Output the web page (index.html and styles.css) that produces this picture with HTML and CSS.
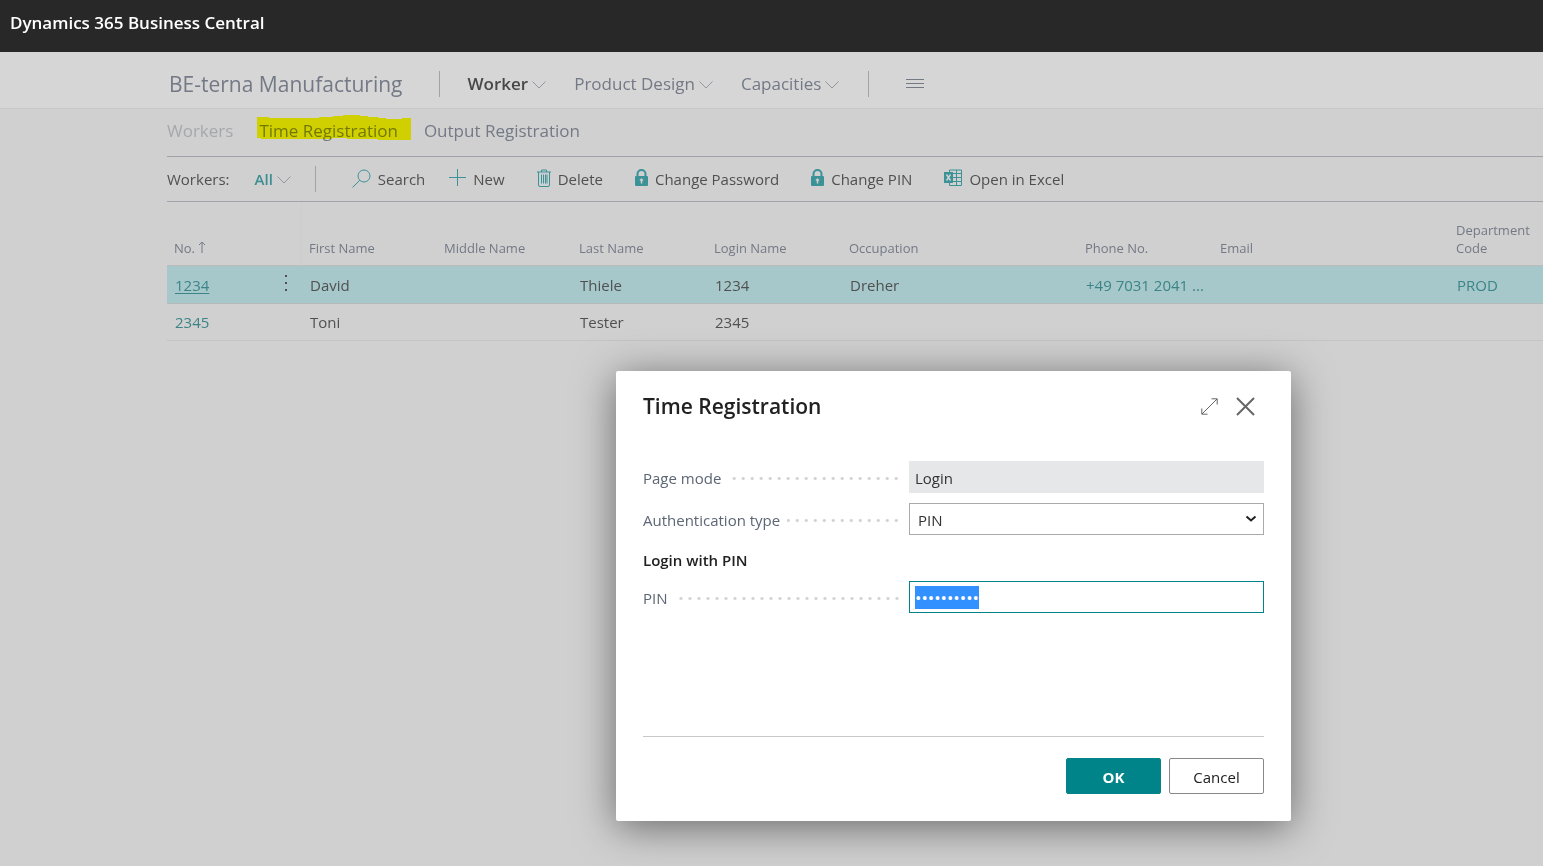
FILE: index.html
```html
<!DOCTYPE html>
<html lang="en">
<head>
  <meta charset="UTF-8">
  <meta name="viewport" content="width=device-width, initial-scale=1.0">
  <title>Workers - Dynamics 365 Business Central</title>
  <link rel="stylesheet" href="styles.css">
</head>
<body>
  <header class="topbar">Dynamics 365 Business Central</header>

  <nav class="navbar">
    <a class="company" href="#">BE-terna Manufacturing</a>
    <span class="divider"></span>
    <div class="menus">
      <button class="menu active">Worker
        <svg class="chevron" viewBox="0 0 14 8"><path d="M.5.5 7 7 13.500.5"/></svg>
      </button>
      <button class="menu">Product Design
        <svg class="chevron" viewBox="0 0 14 8"><path d="M.5.5 7 7 13.500.5"/></svg>
      </button>
      <button class="menu">Capacities
        <svg class="chevron" viewBox="0 0 14 8"><path d="M.5.5 7 7 13.500.5"/></svg>
      </button>
    </div>
    <span class="divider"></span>
    <button class="burger" aria-label="More">
      <svg width="18" height="10" viewBox="0 0 18 10"><path d="M0 .5h18M0 4.500h18M0 8.500h18"/></svg>
    </button>
  </nav>

  <main class="content">
    <nav class="tabs">
      <a class="tab current" href="#">Workers</a>
      <a class="tab marked" href="#">Time Registration
        <svg class="marker" viewBox="0 0 154 25" preserveAspectRatio="none"><path d="M0 2h12v1h50V2h14V1h10V0h17v1h8v1h10v1h8v1h16V3h9v22h-33v-1H90v-1H75v1H4v-1H0z"/></svg>
      </a>
      <a class="tab" href="#">Output Registration</a>
    </nav>

    <div class="toolbar">
      <span class="list-name">Workers:</span>
      <button class="filter">All
        <svg class="chevron" viewBox="0 0 14 8"><path d="M.5.5 7 7 13.500.5"/></svg>
      </button>
      <span class="divider"></span>
      <button class="action search">
        <svg width="19" height="19" viewBox="0 0 19 19"><circle cx="12" cy="7" r="6"/><path d="M7.800 11.300.5 18.500"/></svg>
        Search
      </button>
      <div class="actions">
        <button class="action">
          <svg width="17" height="18" viewBox="0 0 17 18"><path d="M8.500 0v17M0 8.500h17"/></svg>
          New
        </button>
        <button class="action">
          <svg width="14" height="18" viewBox="0 0 14 18"><path d="M0 3h14M4.500 3V1h5v2M1.500 3v13q0 1.500 1.500 1.500h8q1.500 0 1.500-1.500V3M4.500 5.500v9M6.500 5.500v9M8.500 5.500v9M10 5.500v9"/></svg>
          Delete
        </button>
        <button class="action">
          <svg width="13" height="18" viewBox="0 0 13 18"><path class="shackle" d="M2.500 8V5a4 4 0 0 1 8 0v3"/><rect class="solid" y="7" width="13" height="10" rx="1"/><path class="key" d="M6.500 9.500v5M4.800 11h3.400"/></svg>
          Change Password
        </button>
        <button class="action">
          <svg width="13" height="18" viewBox="0 0 13 18"><path class="shackle" d="M2.500 8V5a4 4 0 0 1 8 0v3"/><rect class="solid" y="7" width="13" height="10" rx="1"/><path class="key" d="M6.500 9.500v5M4.800 11h3.400"/></svg>
          Change PIN
        </button>
        <button class="action">
          <svg width="18" height="18" viewBox="0 0 18 18"><path d="M5.500 3.500v-2.500h12v15.500h-12v-2.500M9 4.500h8.500M9 8.500h8.500M9 12.500h8.500M12.500 1v15.500"/><rect class="solid" y="3" width="9" height="11"/><path class="cross" d="m2.500 5.500 4 6m0-6-4 6"/></svg>
          Open in Excel
        </button>
      </div>
    </div>

    <table class="workers">
      <colgroup>
        <col class="col-no"><col class="col-more"><col class="col"><col class="col"><col class="col"><col class="col">
        <col class="col-wide"><col class="col"><col class="col-wide"><col>
      </colgroup>
      <thead>
        <tr>
          <th colspan="2">No. <svg class="sort" width="8" height="12" viewBox="0 0 8 12"><path d="M4 12V1M1 4l3-3 3 3"/></svg></th>
          <th>First Name</th>
          <th>Middle Name</th>
          <th>Last Name</th>
          <th>Login Name</th>
          <th>Occupation</th>
          <th>Phone No.</th>
          <th>Email</th>
          <th>Department Code</th>
        </tr>
      </thead>
      <tbody>
        <tr class="selected">
          <td><a href="#">1234</a></td>
          <td class="more"><button aria-label="Row menu"><svg width="3" height="16" viewBox="0 0 3 16"><path d="M0 0h2v2H0zM0 7h2v2H0zM0 14h2v2H0z"/></svg></button></td>
          <td>David</td>
          <td></td>
          <td>Thiele</td>
          <td>1234</td>
          <td>Dreher</td>
          <td><a href="#">+49 7031 2041 ...</a></td>
          <td></td>
          <td><a href="#">PROD</a></td>
        </tr>
        <tr>
          <td><a href="#">2345</a></td>
          <td></td>
          <td>Toni</td>
          <td></td>
          <td>Tester</td>
          <td>2345</td>
          <td></td>
          <td></td>
          <td></td>
          <td></td>
        </tr>
      </tbody>
    </table>
  </main>

  <form class="dialog" role="dialog" aria-labelledby="dialog-title">
    <div class="dialog-head">
      <h1 id="dialog-title">Time Registration</h1>
      <button type="button" aria-label="Expand">
        <svg width="17" height="17" viewBox="0 0 17 17"><path d="M1 16 16 1M10.500.800H16.200V6.500M.8 10.500v5.700h5.700"/></svg>
      </button>
      <button type="button" class="close" aria-label="Close">
        <svg width="19" height="19" viewBox="0 0 19 19"><path d="m1 1 17 17M18 1 1 18"/></svg>
      </button>
    </div>

    <div class="fields">
      <div class="field">
        <label for="mode">Page mode</label>
        <span class="dots"></span>
        <input id="mode" type="text" value="Login" readonly>
      </div>
      <div class="field">
        <label for="auth">Authentication type</label>
        <span class="dots"></span>
        <div class="select">
          <select id="auth">
            <option>PIN</option>
          </select>
          <svg width="12" height="8" viewBox="0 0 12 8"><path d="m1.500 1.500 4.500 4 4.500-4"/></svg>
        </div>
      </div>
      <h2>Login with PIN</h2>
      <div class="field">
        <label for="pin">PIN</label>
        <span class="dots"></span>
        <input id="pin" type="password" value="1234567890" autofocus>
      </div>
    </div>

    <div class="dialog-foot">
      <button type="submit" class="ok">OK</button>
      <button type="button" class="cancel">Cancel</button>
    </div>
  </form>

  <script>
    // Start with the PIN selected so typing replaces it
    const pin = document.getElementById('pin');
    pin.focus();
    pin.select();
  </script>
</body>
</html>
```

FILE: styles.css
```css
* {
  box-sizing: border-box;
}
body {
  margin: 0;
  min-height: 100vh;
  position: relative;
  font-family: "Segoe UI", "Open Sans", sans-serif;
  font-size: 15px;
  line-height: 20px;
  color: #505050;
  background: #d0d0d0;
  overflow-x: hidden;
}
a {
  color: inherit;
  text-decoration: none;
}
button {
  padding: 0;
  border: none;
  background: none;
  font: inherit;
  color: inherit;
  cursor: pointer;
}
svg {
  display: block;
  flex-shrink: 0;
  fill: none;
  stroke: currentColor;
}
.topbar {
  height: 52px;
  padding: 13px 10px;
  background: #282828;
  color: #fff;
  font-size: 17px;
  font-weight: 600;
}

/* Navigation */
.navbar {
  display: flex;
  align-items: center;
  height: 57px;
  padding: 8px 0 0 169px;
  border-bottom: 1px solid #c8c8c8;
  background: #d6d6d6;
  color: #737985;
  font-size: 17px;
}
.company {
  margin-right: 36px;
  font-size: 21px;
}
.divider {
  width: 1px;
  height: 26px;
  background: #a0a3a9;
}
.menus {
  display: flex;
  gap: 28px;
  margin: 0 29px 0 28px;
}
.menu,
.filter {
  display: flex;
  align-items: center;
  gap: 4px;
}
.menu.active {
  color: #484848;
  font-weight: 600;
}
.chevron {
  width: 14px;
  height: 8px;
  margin-top: 2px;
  color: #92969e;
}
.burger {
  margin-left: 37px;
}
.content {
  padding-left: 167px;
}
.tabs {
  display: flex;
  align-items: center;
  gap: 26px;
  height: 47px;
  padding-bottom: 3px;
  color: #737985;
  font-size: 17px;
}
.tab.current {
  color: #a6a8ad;
}
.marked {
  position: relative;
}
.marker {
  position: absolute;
  top: -6px;
  left: -2px;
  width: 154px;
  height: 25px;
  fill: #ff0;
  stroke: none;
  mix-blend-mode: multiply;
}

/* Actions */
.toolbar {
  display: flex;
  align-items: center;
  height: 46px;
  border-top: 1px solid #a0a3a9;
  border-bottom: 1px solid #a0a3a9;
}
.list-name {
  margin-right: 25px;
  font-weight: 500;
}
.filter {
  margin-right: 24px;
  color: #3b8f93;
  font-weight: 600;
}
.search {
  margin: 0 24px 0 36px;
}
.actions {
  display: flex;
  gap: 32px;
}
.action {
  display: flex;
  align-items: center;
  gap: 7px;
}
.action svg {
  margin-top: -2px;
  color: #3b9297;
}
.action .solid {
  fill: currentColor;
  stroke: none;
}
.action .shackle {
  stroke-width: 2;
}
.action .key,
.action .cross {
  stroke: #d0d0d0;
  stroke-width: 1.5;
}

/* List */
.workers {
  width: 100%;
  table-layout: fixed;
  border-collapse: separate;
  border-spacing: 0;
}
.col-no {
  width: 104px;
}
.col-more {
  width: 31px;
}
.col {
  width: 135px;
}
.col-wide {
  width: 236px;
}
.workers th {
  height: 64px;
  padding: 0 0 8px 7px;
  border-bottom: 1px solid #bbb;
  color: #737985;
  font-size: 13px;
  font-weight: 400;
  line-height: 18px;
  text-align: left;
  vertical-align: bottom;
}
.workers th:first-child {
  border-right: 1px solid #cdcdcd;
}
.sort {
  display: inline-block;
}
.workers td {
  height: 37px;
  padding: 0 0 0 8px;
  border-bottom: 1px solid #c4c4c4;
  white-space: nowrap;
}
.workers td a {
  color: #3b8488;
}
.workers .selected td {
  height: 38px;
  border-color: #b4b8b8;
  background: #a6c8ca;
}
.selected td:first-child a {
  text-decoration: underline;
  text-underline-offset: 2px;
}
.selected .more {
  padding-left: 14px;
}
.more svg {
  fill: currentColor;
  stroke: none;
}

/* Dialog */
.dialog {
  position: absolute;
  top: 371px;
  right: 252px;
  width: 675px;
  padding: 20px 27px 27px;
  border-radius: 2px;
  background: #fff;
  color: #212121;
  box-shadow: 0 6px 40px rgba(0, 0, 0, .5);
}
.dialog-head {
  display: flex;
  align-items: center;
  gap: 18px;
  height: 30px;
  padding-right: 9px;
  color: #666;
}
.dialog-head h1 {
  flex: 1;
  margin: 0;
  color: #212121;
  font-size: 21px;
  font-weight: 600;
}
.close svg {
  stroke-width: 2;
}
.fields {
  height: 276px;
  margin-top: 40px;
  border-bottom: 1px solid #c8c8c8;
}
.field {
  display: flex;
  align-items: center;
  margin-bottom: 10px;
}
.field label {
  padding-top: 2px;
  color: #5c6675;
}
.dots {
  flex: 1;
  height: 3px;
  margin: 2px 8px 0 7px;
  background: radial-gradient(circle, #d0d0d0 1px, transparent 2px) right center / 9px 3px repeat-x;
}
.field input,
.select {
  width: 355px;
  height: 32px;
}
.field input,
.select select {
  padding: 2px 5px 0;
  border: 1px solid #aaa;
  border-radius: 0;
  outline: none;
  background: #fff;
  color: #333;
  font: inherit;
}
#mode {
  border-color: #e5e7e9;
  background: #e5e7e9;
}
#pin {
  padding-top: 0;
  border-color: #008489;
  font-size: 17px;
}
#pin::selection {
  background: #3390ff;
  color: #fff;
}
.select {
  display: grid;
  align-items: center;
}
.select select,
.select svg {
  grid-area: 1 / 1;
}
.select select {
  width: 100%;
  height: 32px;
  padding-left: 8px;
  appearance: none;
}
.select svg {
  justify-self: end;
  margin-right: 7px;
  color: #212121;
  stroke-width: 2;
  pointer-events: none;
}
.fields h2 {
  margin: 15px 0 11px;
  font-size: 15px;
  font-weight: 600;
}
.dialog-foot {
  display: flex;
  justify-content: flex-end;
  gap: 8px;
  padding-top: 21px;
}
.dialog-foot button {
  width: 95px;
  height: 36px;
  padding-top: 2px;
  border: 1px solid #888;
  border-radius: 2px;
  font-weight: 500;
}
.dialog-foot .ok {
  border-color: #008489;
  background: #008489;
  color: #fff;
  font-weight: 700;
}
```
